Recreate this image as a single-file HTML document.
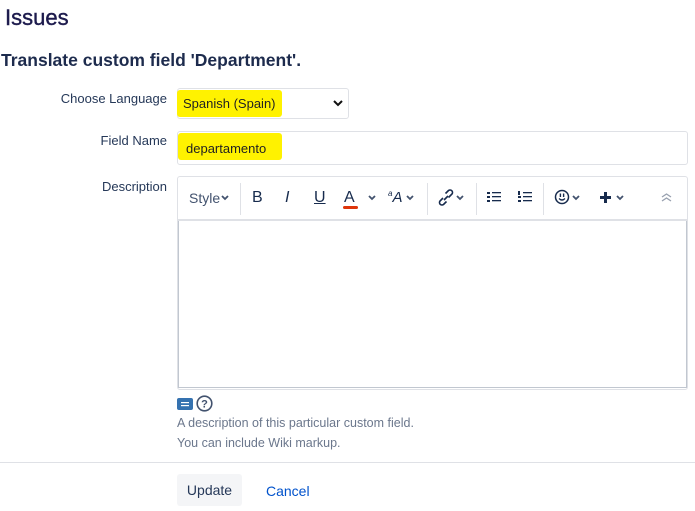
<!DOCTYPE html>
<html><head><style>
body{margin:0;width:695px;height:511px;background:#fff;font-family:"Liberation Sans",sans-serif;color:#172b4d;position:relative;overflow:hidden}
.a{position:absolute}
.lbl{position:absolute;right:528px;font-size:13px;color:#253858;white-space:nowrap}
.tb{position:absolute;top:189px;font-size:15px;color:#172b4d}
.sep{position:absolute;top:183px;width:1px;height:32px;background:#dfe1e6}
.cv{position:absolute;top:195px}
</style></head><body>
<div class="a" style="left:5px;top:5px;font-size:22px;color:#1d1b4d;-webkit-text-stroke:0.4px #1d1b4d">Issues</div>
<div class="a" style="left:1px;top:50px;font-size:17.5px;font-weight:bold;color:#1d2b4d">Translate custom field 'Department'.</div>

<div class="lbl" style="top:91px">Choose Language</div>
<div class="a" style="left:177px;top:88px;width:170px;height:29px;border:1px solid #dfe1e6;border-radius:3px"></div>
<div class="a" style="left:177px;top:90px;width:105px;height:27px;background:#fff200;border-radius:3px"></div>
<div class="a" style="left:183px;top:96px;font-size:13px;color:#222">Spanish (Spain)</div>
<svg class="a" style="left:333px;top:100px" width="10" height="7"><path d="M1 1L5 5L9 1" stroke="#111" stroke-width="2" fill="none"/></svg>

<div class="lbl" style="top:133px">Field Name</div>
<div class="a" style="left:177px;top:131px;width:509px;height:32px;border:1px solid #dfe1e6;border-radius:3px"></div>
<div class="a" style="left:178px;top:133px;width:104px;height:27px;background:#fff200;border-radius:3px"></div>
<div class="a" style="left:186px;top:141px;font-size:13px;color:#222">departamento</div>

<div class="lbl" style="top:179px">Description</div>
<div class="a" style="left:177px;top:176px;width:509px;height:212px;border:1px solid #dfe1e6;border-radius:3px"></div>
<div class="a" style="left:178px;top:219px;width:509px;height:2px;background:#dfe1e6"></div>
<div class="a" style="left:178px;top:221px;width:507px;height:166px;border:1px solid #c1c7d0;border-top:none"></div>
<div class="tb" style="left:189px;font-size:14px;top:190px;color:#42526e">Style</div>
<svg class="cv" style="left:221px" width="8" height="6"><path d="M1 1L4 4L7 1" stroke="#42526e" stroke-width="1.8" fill="none"/></svg>
<div class="sep" style="left:240px"></div>
<div class="tb" style="left:252px;font-size:16px">B</div>
<div class="tb" style="left:285px;font-style:italic;font-size:16px">I</div>
<div class="tb" style="left:314px;text-decoration:underline;font-size:16px">U</div>
<div class="tb" style="left:344px;font-size:16px">A</div>
<div class="a" style="left:343px;top:206px;width:15px;height:3px;background:#de350b;border-radius:2px"></div>
<svg class="cv" style="left:368px" width="8" height="6"><path d="M1 1L4 4L7 1" stroke="#42526e" stroke-width="1.8" fill="none"/></svg>
<div class="tb" style="left:388px;font-style:italic;font-size:15px"><sup style="font-size:8px">a</sup>A</div>
<svg class="cv" style="left:406px" width="8" height="6"><path d="M1 1L4 4L7 1" stroke="#42526e" stroke-width="1.8" fill="none"/></svg>
<div class="sep" style="left:427px"></div>
<svg class="a" style="left:437px;top:189px" width="18" height="18"><path d="M7 11L11 7M6 9L3 12a2.5 2.5 0 0 0 3.5 3.5L9.5 12.5M11.5 8.5L15 5a2.5 2.5 0 0 0-3.5-3.5L8.5 4.5" stroke="#172b4d" stroke-width="1.6" fill="none"/></svg>
<svg class="cv" style="left:456px" width="8" height="6"><path d="M1 1L4 4L7 1" stroke="#42526e" stroke-width="1.8" fill="none"/></svg>
<div class="sep" style="left:476px"></div>
<svg class="a" style="left:487px;top:191px" width="14" height="12"><g fill="#172b4d"><rect x="0" y="1" width="3" height="2"/><rect x="0" y="5" width="3" height="2"/><rect x="0" y="9" width="3" height="2"/><rect x="5" y="1" width="9" height="1.3"/><rect x="5" y="5" width="9" height="1.3"/><rect x="5" y="9" width="9" height="1.3"/></g></svg>
<svg class="a" style="left:518px;top:191px" width="14" height="12"><g fill="#172b4d"><rect x="0" y="0" width="2" height="4"/><rect x="0" y="5" width="3" height="2"/><rect x="0" y="9" width="3" height="2"/><rect x="5" y="1" width="9" height="1.3"/><rect x="5" y="5" width="9" height="1.3"/><rect x="5" y="9" width="9" height="1.3"/></g></svg>
<div class="sep" style="left:543px"></div>
<svg class="a" style="left:554px;top:189px" width="16" height="16"><circle cx="8" cy="8" r="6.5" stroke="#172b4d" stroke-width="1.5" fill="none"/><rect x="5.7" y="4.5" width="1.4" height="3.5" fill="#172b4d"/><rect x="8.9" y="4.5" width="1.4" height="3.5" fill="#172b4d"/><path d="M5 9.5Q8 12.5 11 9.5" stroke="#172b4d" stroke-width="1.3" fill="none"/></svg>
<svg class="cv" style="left:572px" width="8" height="6"><path d="M1 1L4 4L7 1" stroke="#42526e" stroke-width="1.8" fill="none"/></svg>
<svg class="a" style="left:599px;top:191px" width="13" height="13"><path d="M6.5 1V12M1 6.5H12" stroke="#172b4d" stroke-width="3"/></svg>
<svg class="cv" style="left:616px" width="8" height="6"><path d="M1 1L4 4L7 1" stroke="#42526e" stroke-width="1.8" fill="none"/></svg>
<svg class="a" style="left:661px;top:193px" width="11" height="9"><path d="M1 4L5.5 1L10 4M1 8L5.5 5L10 8" stroke="#97a0af" stroke-width="1.3" fill="none"/></svg>

<svg class="a" style="left:177px;top:398px" width="16" height="12"><rect width="16" height="12" rx="2" fill="#3572b0"/><rect x="4" y="4" width="8" height="1.2" fill="#fff"/><rect x="4" y="7" width="8" height="1.2" fill="#fff"/></svg>
<svg class="a" style="left:196px;top:395px" width="17" height="17"><circle cx="8.5" cy="8.5" r="7.3" stroke="#42526e" stroke-width="1.6" fill="none"/><text x="8.5" y="12.5" font-size="11" font-weight="bold" text-anchor="middle" fill="#42526e" font-family="Liberation Sans">?</text></svg>
<div class="a" style="left:177px;top:416px;font-size:12.5px;color:#6b778c">A description of this particular custom field.</div>
<div class="a" style="left:177px;top:436px;font-size:12.5px;color:#6b778c">You can include Wiki markup.</div>
<div class="a" style="left:0;top:462px;width:695px;height:1px;background:#dfe1e6"></div>
<div class="a" style="left:177px;top:474px;width:65px;height:32px;background:#f4f5f7;border-radius:3px;font-size:14px;line-height:32px;text-align:center;color:#253858">Update</div>
<div class="a" style="left:266px;top:483px;font-size:14px;color:#0052cc">Cancel</div>
</body></html>
